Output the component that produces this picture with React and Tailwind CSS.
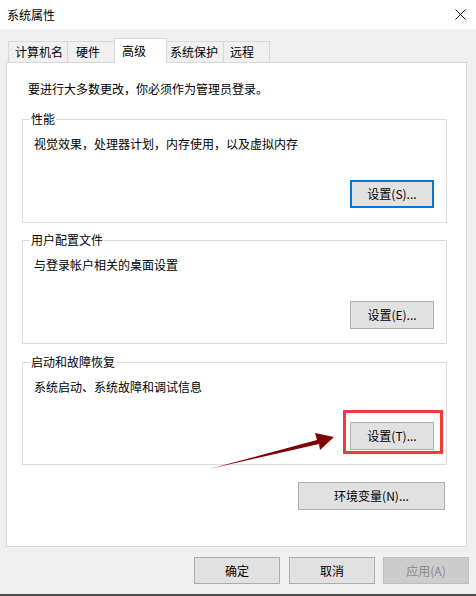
import React from "react";

const font = { fontFamily: '"Noto Sans CJK SC", "Noto Sans", sans-serif' };

function Btn({ children, className = "", focus = false, disabled = false }) {
  return (
    <div
      className={
        "flex items-center justify-center text-[12px] leading-[16px] " +
        (disabled
          ? "bg-[#cccccc] border border-[#bfbfbf] text-[#8a8a8a] "
          : focus
          ? "bg-[#e1e1e1] border-2 border-[#0078d7] text-black "
          : "bg-[#e1e1e1] border border-[#adadad] text-black ") +
        className
      }
    >
      {children}
    </div>
  );
}

function Group({ label, text, children, className = "" }) {
  return (
    <div className={"relative border border-[#dcdcdc] flex flex-col pl-[11px] pt-[16px] " + className}>
      <span className="absolute top-[-9px] left-[7px] bg-white px-[1px] text-[12px] leading-[16px] text-black">
        {label}
      </span>
      <div className="text-[12px] leading-[16px] text-black">{text}</div>
      {children}
    </div>
  );
}

export default function App() {
  return (
    <div
      className="relative w-[476px] h-[596px] bg-[#f0f0f0] flex flex-col overflow-hidden text-black"
      style={font}
    >
      {/* title bar */}
      <div className="h-[29px] bg-white flex items-center justify-between pl-[7px] pr-[10px] shrink-0">
        <span className="text-[12px] leading-[16px]">系统属性</span>
        <svg width="11" height="11" viewBox="0 0 11 11">
          <path d="M0.5 0.5 L10.5 10.5 M10.5 0.5 L0.5 10.5" stroke="#111" strokeWidth="1" fill="none" />
        </svg>
      </div>

      {/* tabs */}
      <div className="mt-[9px] h-[24px] flex items-end pl-[8px] shrink-0 text-[12px] leading-[16px]">
        <div className="h-[21px] w-[59px] border-t border-l border-[#d9d9d9] bg-[#f0f0f0] flex items-center pl-[6px]">
          计算机名
        </div>
        <div className="h-[21px] w-[47px] border-t border-l border-[#d9d9d9] bg-[#f0f0f0] flex items-center pl-[8px]">
          硬件
        </div>
        <div className="relative z-10 h-[25px] -mb-[1px] w-[53px] border border-b-0 border-[#d9d9d9] bg-white flex items-center pl-[7px] pb-[1px]">
          高级
        </div>
        <div className="h-[21px] w-[56px] border-t border-[#d9d9d9] bg-[#f0f0f0] flex items-center pl-[3px]">
          系统保护
        </div>
        <div className="h-[21px] w-[47px] border-t border-l border-r border-[#d9d9d9] bg-[#f0f0f0] flex items-center pl-[6px]">
          远程
        </div>
      </div>

      {/* panel */}
      <div className="ml-[6px] w-[461px] h-[485px] border border-[#d9d9d9] bg-white flex flex-col shrink-0">
        <div className="pl-[21px] pt-[18px] text-[12px] leading-[16px]">
          要进行大多数更改，你必须作为管理员登录。
        </div>
        <div className="ml-[15px] w-[425px] mt-[22px] flex flex-col">
          <Group label="性能" text="视觉效果，处理器计划，内存使用，以及虚拟内存" className="h-[104px]">
            <Btn focus className="self-end mr-[12px] mt-auto mb-[14px] w-[84px] h-[28px]">
              设置(S)...
            </Btn>
          </Group>
          <Group label="用户配置文件" text="与登录帐户相关的桌面设置" className="h-[104px] mt-[17px]">
            <Btn className="self-end mr-[12px] mt-auto mb-[14px] w-[84px] h-[28px]">设置(E)...</Btn>
          </Group>
          <Group label="启动和故障恢复" text="系统启动、系统故障和调试信息" className="h-[103px] mt-[18px]">
            <div className="relative self-end mr-[12px] mt-auto mb-[14px] w-[84px] h-[28px]">
              <Btn className="w-full h-full">设置(T)...</Btn>
              <div className="absolute left-[-7px] right-[-9px] top-[-12px] bottom-[-4px] border-[3px] border-[#f23a3a]" />
            </div>
          </Group>
          <Btn className="self-end mr-[2px] mt-[17px] w-[147px] h-[28px]">环境变量(N)...</Btn>
        </div>
      </div>

      {/* bottom buttons */}
      <div className="mt-[10px] flex justify-end gap-[8px] pr-[7px] shrink-0">
        <Btn className="w-[86px] h-[27px] mr-[1px]">确定</Btn>
        <Btn className="w-[86px] h-[27px]">取消</Btn>
        <Btn disabled className="w-[86px] h-[27px]">应用(A)</Btn>
      </div>

      <div className="mt-auto h-[2px] bg-[#4d4d4d] shrink-0" />

      {/* annotation arrow */}
      <svg className="absolute left-0 top-0 pointer-events-none" width="476" height="596" viewBox="0 0 476 596">
        <polygon
          points="209,469 317,440 315,433 334,437 320,450 319,444"
          fill="#800000"
        />
      </svg>
    </div>
  );
}
